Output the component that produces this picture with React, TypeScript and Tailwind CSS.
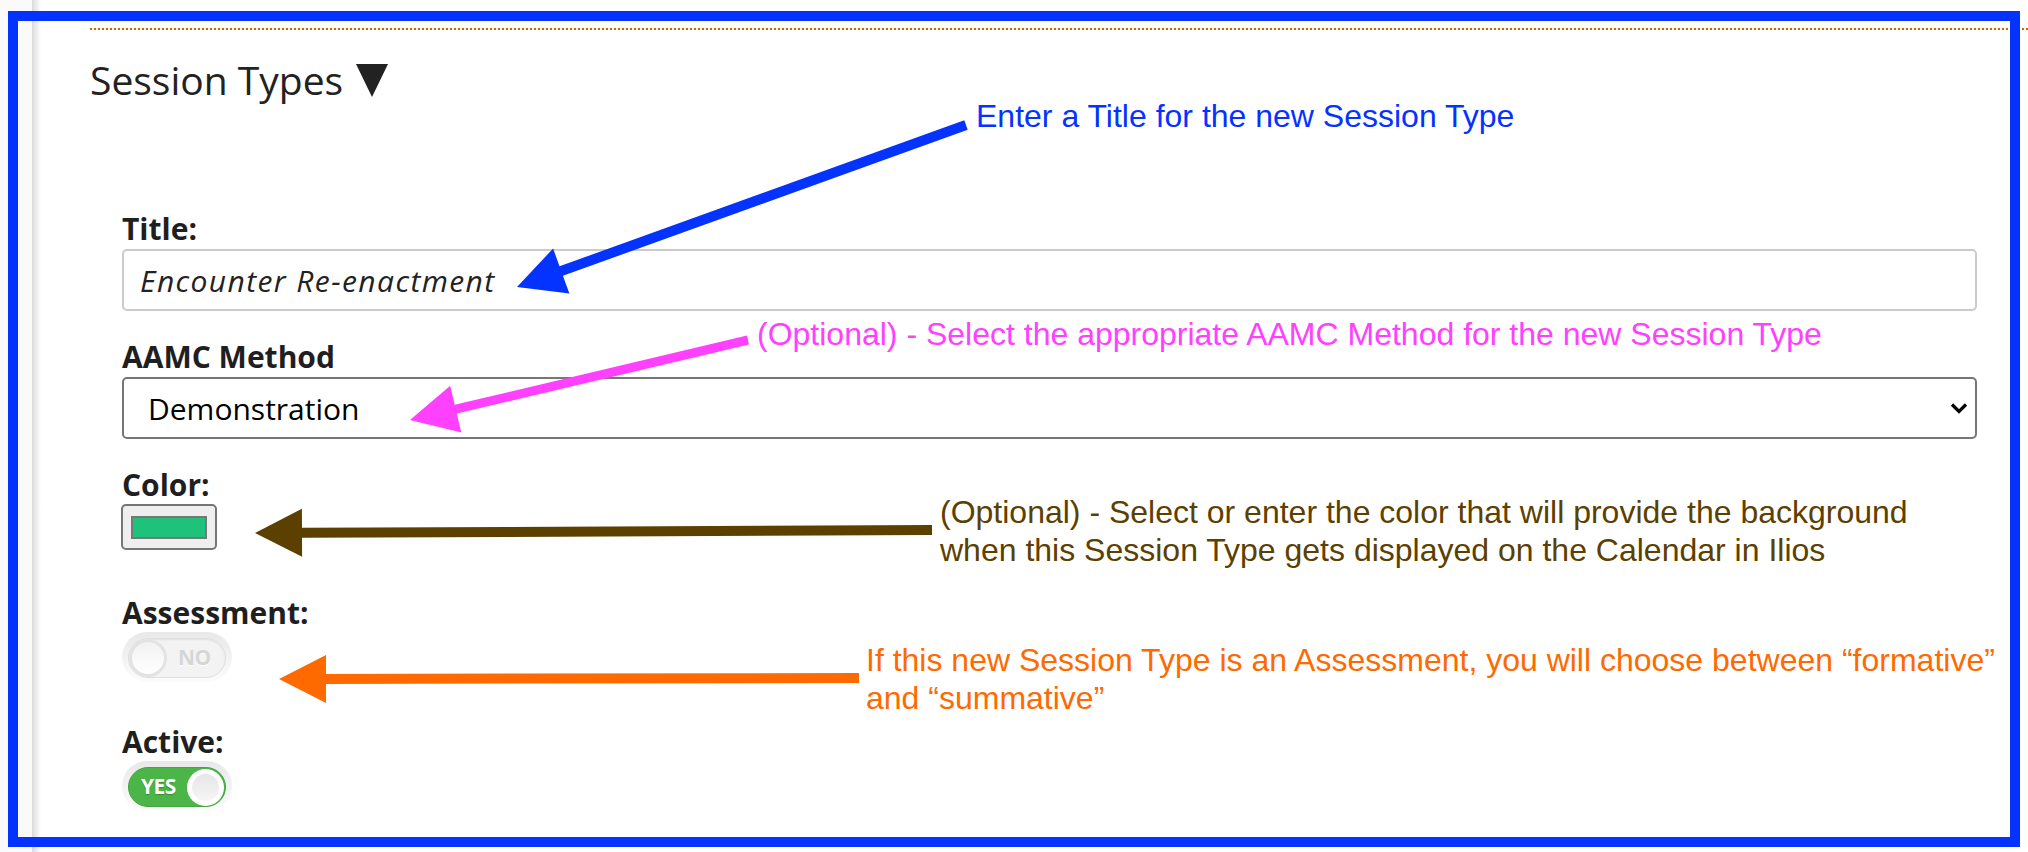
import React from 'react';

type Pt = [number, number];

// polygon for a straight arrow: shaft of width w, head of length hl and half width hw
function arrowPoints(tail: Pt, tip: Pt, w: number, hl = 47, hw = 24) {
    const dx = tip[0] - tail[0];
    const dy = tip[1] - tail[1];
    const len = Math.hypot(dx, dy);
    const ux = dx / len;
    const uy = dy / len;
    const nx = -uy;
    const ny = ux;
    const bx = tip[0] - ux * hl;
    const by = tip[1] - uy * hl;
    const pts: Pt[] = [
        [tail[0] + (nx * w) / 2, tail[1] + (ny * w) / 2],
        [bx + (nx * w) / 2, by + (ny * w) / 2],
        [bx + nx * hw, by + ny * hw],
        tip,
        [bx - nx * hw, by - ny * hw],
        [bx - (nx * w) / 2, by - (ny * w) / 2],
        [tail[0] - (nx * w) / 2, tail[1] - (ny * w) / 2],
    ];
    return pts.map((p) => `${p[0].toFixed(1)},${p[1].toFixed(1)}`).join(' ');
}

const arrows = [
    { color: '#0433ff', tail: [966, 125] as Pt, tip: [517, 287] as Pt, w: 10 },
    { color: '#ff40ff', tail: [748, 340] as Pt, tip: [410, 420] as Pt, w: 9 },
    { color: '#5c4000', tail: [932, 530] as Pt, tip: [255, 533] as Pt, w: 10 },
    { color: '#ff6a00', tail: [859, 678] as Pt, tip: [279, 679] as Pt, w: 10 },
];

function Label({ children }: { children: React.ReactNode }) {
    return <div className="text-[30px] leading-[29px] font-bold text-[#1f1f1f]">{children}</div>;
}

function Toggle({ on }: { on: boolean }) {
    return (
        <div className="w-[110px] h-[50px] rounded-full bg-gradient-to-b from-[#e8e8e8] to-[#fcfcfc] pt-[6px] pl-[6px]">
            {on ? (
                <div className="w-[98px] h-[40px] rounded-full bg-[#4bb548] border border-[#43a540] flex items-center justify-between pl-[12px] pr-[1px]">
                    <span className="text-[21px] font-bold text-white tracking-tight [text-shadow:0_1px_1px_rgba(0,0,0,0.25)]">
                        YES
                    </span>
                    <div className="w-[37px] h-[37px] rounded-full bg-white flex items-center justify-center">
                        <div className="w-[27px] h-[27px] rounded-full bg-gradient-to-b from-[#e6e6e6] to-[#f6f6f6]" />
                    </div>
                </div>
            ) : (
                <div className="w-[98px] h-[40px] rounded-full bg-[#f3f3f3] border border-[#e0e0e0] shadow-[inset_0_1px_2px_rgba(0,0,0,0.08)] flex items-center">
                    <div className="w-[38px] h-[38px] rounded-full bg-gradient-to-b from-[#f2f2f2] to-white border-[3px] border-[#e3e3e3]" />
                    <span className="ml-[11px] text-[21px] font-bold text-[#d6d6d6] tracking-tight [text-shadow:0_1px_0_#ffffff]">
                        NO
                    </span>
                </div>
            )}
        </div>
    );
}

export default function App() {
    return (
        <div className="relative w-[2028px] h-[852px] overflow-hidden bg-white flex font-['Open_Sans',sans-serif] text-[#1f1f1f]">
            <div className="w-[32px] bg-[#fafafa]" />
            <div className="w-[9px] bg-gradient-to-r from-[#dadada] to-white" />

            <main className="flex-1 pl-[49px] pt-[28px]">
                <div className="h-[2px] bg-[repeating-linear-gradient(to_right,#c96800_0_2px,transparent_2px_4px)]" />

                <h1 className="mt-[30px] flex items-center gap-[13px] text-[39px] leading-[39px] font-normal text-[#222]">
                    Session Types
                    <svg width="32" height="33" viewBox="0 0 32 33" className="mt-[2px]">
                        <polygon points="0,0 32,0 16,33" fill="#222" />
                    </svg>
                </h1>

                <form className="mt-[115px] pl-[32px] pr-[51px] flex flex-col">
                    <Label>Title:</Label>
                    <div className="mt-[6px] h-[62px] rounded-[5px] border-2 border-[#cbcbcb] flex items-center pl-[16px]">
                        <span className="italic text-[30px] tracking-[1.4px] text-[#222]">Encounter Re-enactment</span>
                    </div>

                    <div className="mt-[31px]">
                        <Label>AAMC Method</Label>
                    </div>
                    <div className="mt-[6px] h-[62px] rounded-[5px] border-2 border-[#767676] flex items-center justify-between pl-[24px] pr-[7px]">
                        <span className="text-[30px] text-black">Demonstration</span>
                        <svg width="18" height="12" viewBox="0 0 18 12">
                            <polyline points="2,2.5 9,9.5 16,2.5" fill="none" stroke="#000" strokeWidth="3.2" />
                        </svg>
                    </div>

                    <div className="mt-[31px]">
                        <Label>Color:</Label>
                    </div>
                    <div className="mt-[5px] -ml-[1px] w-[96px] h-[46px] rounded-[5px] border-2 border-[#767676] bg-[#efefef] flex items-center justify-center">
                        <div className="w-[76px] h-[23px] border-2 border-[#777] bg-[#1fc27b]" />
                    </div>

                    <div className="mt-[48px]">
                        <Label>Assessment:</Label>
                    </div>
                    <div className="mt-[5px]">
                        <Toggle on={false} />
                    </div>

                    <div className="mt-[45px]">
                        <Label>Active:</Label>
                    </div>
                    <div className="mt-[5px]">
                        <Toggle on />
                    </div>
                </form>
            </main>

            {/* annotations laid over the screenshot */}
            <div className="absolute left-[8px] top-[11px] w-[2012px] h-[836px] border-[10px] border-[#0433ff] pointer-events-none" />

            <svg className="absolute left-0 top-0 pointer-events-none" width="2028" height="852">
                {arrows.map((a, i) => (
                    <polygon key={i} points={arrowPoints(a.tail, a.tip, a.w)} fill={a.color} />
                ))}
            </svg>

            <div className="absolute inset-0 pointer-events-none font-['Liberation_Sans',Arial,sans-serif] text-[32px] leading-[38px]">
                <div className="absolute left-[976px] top-[97px] text-[#0433ff] whitespace-nowrap">
                    Enter a Title for the new Session Type
                </div>
                <div className="absolute left-[757px] top-[315px] text-[#ff40ff] whitespace-nowrap">
                    (Optional) - Select the appropriate AAMC Method for the new Session Type
                </div>
                <div className="absolute left-[940px] top-[493px] text-[#5c4000] whitespace-nowrap">
                    (Optional) - Select or enter the color that will provide the background
                    <br />
                    when this Session Type gets displayed on the Calendar in Ilios
                </div>
                <div className="absolute left-[866px] top-[641px] text-[#ff6a00] whitespace-nowrap">
                    If this new Session Type is an Assessment, you will choose between “formative”
                    <br />
                    and “summative”
                </div>
            </div>
        </div>
    );
}
